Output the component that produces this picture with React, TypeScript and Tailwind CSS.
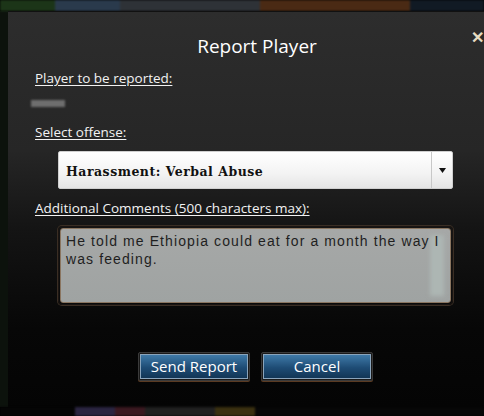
export default function App() {
  const label = "block h-[18px] text-[13.5px] leading-[18px] text-[#f2f2f2] underline underline-offset-2 decoration-1";
  return (
    <div className="flex h-[416px] w-[484px] flex-col overflow-hidden bg-black" style={{ fontFamily: "'Open Sans', sans-serif" }}>
      {/* game background peeking above */}
      <div className="flex h-[11px] shrink-0 blur-[1px]">
        <div className="w-[55px] bg-[#1c3518]" />
        <div className="w-[65px] bg-[#2a3a4c]" />
        <div className="w-[140px] bg-[#2e3237]" />
        <div className="w-[150px] bg-[#4a2a14]" />
        <div className="flex-1 bg-[#111a24]" />
      </div>

      <div className="flex min-h-0 flex-1">
        <div className="w-[8px] shrink-0 bg-[#0c120c]" />
        <div className="relative w-[496px] shrink-0 border-t border-[#111] bg-[linear-gradient(to_bottom,#2d2d2d_0%,#262626_35%,#141414_55%,#070707_80%,#040404_100%)] pl-[27px]">
          <span className="absolute left-[463px] top-[17px] text-[16px] font-bold leading-none text-[#e6dcc2]">✕</span>

          <h1 className="mt-[21px] h-[26px] w-[444px] text-center text-[19px] leading-[26px] text-white">Report Player</h1>

          <span className={`${label} mt-[10px]`}>Player to be reported:</span>
          <div className="ml-[-4px] mt-[13px] h-[7px] w-[34px] bg-[#6e6e6e] blur-[1px]" />

          <span className={`${label} mt-[16px]`}>Select offense:</span>

          <div className="ml-[23px] mt-[10px] flex h-[38px] w-[395px] items-center rounded-[2px] border border-[#cfcfcf] bg-[linear-gradient(to_bottom,#ffffff,#f3f3f3_60%,#e4e4e4)]">
            <span className="flex-1 pl-[7px] pt-[5px] text-[12.5px] font-bold tracking-[0.5px] text-[#111]" style={{ fontFamily: "'DejaVu Serif', serif" }}>
              Harassment: Verbal Abuse
            </span>
            <div className="flex h-full w-[21px] items-center justify-center border-l border-[#c8c8c8]">
              <svg width="7" height="5" viewBox="0 0 7 5"><path d="M0 0h7L3.5 5z" fill="#111" /></svg>
            </div>
          </div>

          <span className={`${label} mt-[10px]`}>Additional Comments (500 characters max):</span>

          <div className="ml-[23px] mt-[9px] h-[79px] w-[395px] rounded-[4px] border border-[#1a1411] p-px shadow-[0_0_0_1px_#3a2e24]">
            <div className="relative h-full rounded-[3px] border border-[#8a7560] bg-[linear-gradient(to_bottom,#a6a8a7,#9fa3a2)]">
              <div className="absolute bottom-[6px] right-[6px] top-[6px] w-[14px] bg-[#adb6b3] blur-[2px]" />
              <p className="relative pl-[5px] pr-[6px] pt-[3px] text-[14px] leading-[18px] tracking-[1.1px] text-[#1f1f1f]" style={{ fontFamily: "'Liberation Sans', sans-serif" }}>
                He told me Ethiopia could eat for a month the way I was feeding.
              </p>
            </div>
          </div>

          <div className="ml-[103px] mt-[47px] flex gap-[11px]">
            {["Send Report", "Cancel"].map((t) => (
              <button
                key={t}
                className="h-[29px] w-[112px] rounded-[2px] border border-[#3a3a3a] bg-[#1a1a1a] p-px shadow-[0_1px_0_#5a3a22]"
              >
                <div className="flex h-full w-full items-center justify-center border border-[#8aa4bb] bg-[linear-gradient(to_bottom,#3f7aa8,#1e4c75_55%,#123656)] text-[15px] leading-none text-white">
                  {t}
                </div>
              </button>
            ))}
          </div>
        </div>
      </div>

      <div className="flex h-[9px] shrink-0 blur-[1px]">
        <div className="w-[75px] bg-[#050505]" />
        <div className="w-[40px] bg-[#2a2440]" />
        <div className="w-[30px] bg-[#3a1820]" />
        <div className="w-[70px] bg-[#202020]" />
        <div className="w-[40px] bg-[#3a3010]" />
        <div className="flex-1 bg-[#070707]" />
      </div>
    </div>
  );
}
